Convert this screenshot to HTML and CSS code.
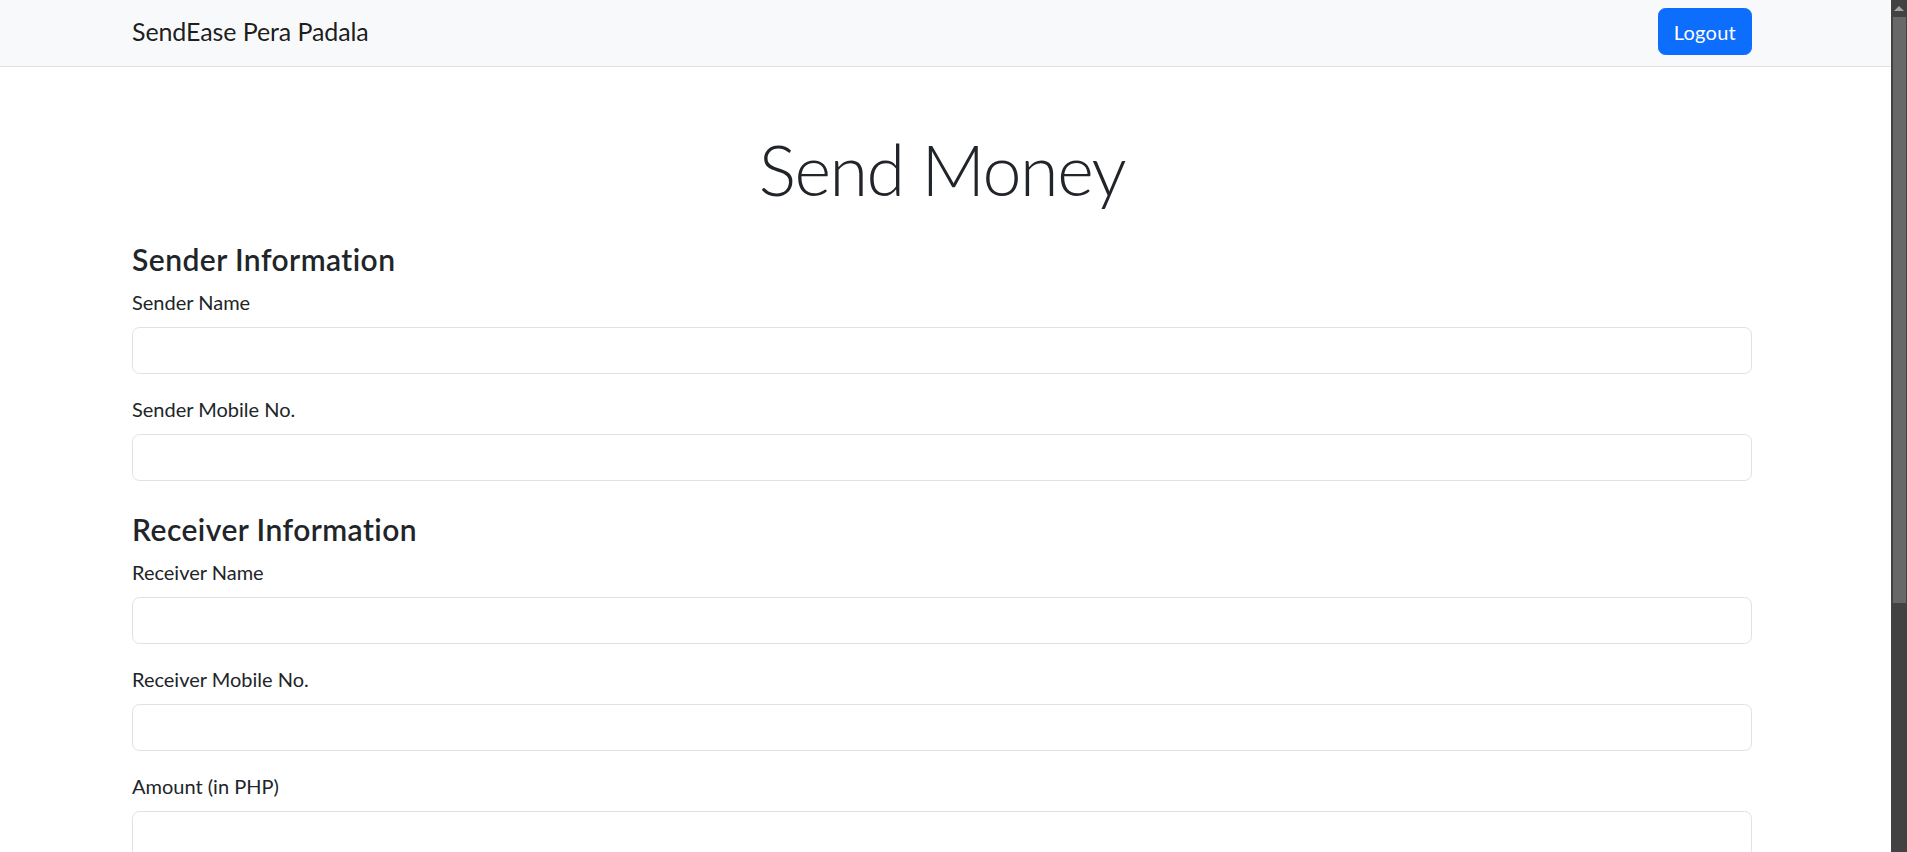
FILE: index.html
```html
<!DOCTYPE html>
<html lang="en">
<head>
<meta charset="utf-8">
<title>SendEase Pera Padala - Send Money</title>
<link rel="stylesheet" href="styles.css">
</head>
<body>
<div class="screen">
  <div class="page">
    <nav class="navbar">
      <div class="navbar-inner">
        <a class="brand" href="#">SendEase Pera Padala</a>
        <button class="btn btn-primary btn-logout" type="button">Logout</button>
      </div>
    </nav>
    <main class="container">
      <h1 class="title">Send Money</h1>
      <form class="send-form">
        <section class="section">
          <h4 class="section-title">Sender Information</h4>
          <div class="field">
            <label class="field-label" for="senderName">Sender Name</label>
            <input class="field-input" id="senderName" type="text">
          </div>
          <div class="field">
            <label class="field-label" for="senderMobile">Sender Mobile No.</label>
            <input class="field-input" id="senderMobile" type="text">
          </div>
        </section>
        <section class="section">
          <h4 class="section-title">Receiver Information</h4>
          <div class="field">
            <label class="field-label" for="receiverName">Receiver Name</label>
            <input class="field-input" id="receiverName" type="text">
          </div>
          <div class="field">
            <label class="field-label" for="receiverMobile">Receiver Mobile No.</label>
            <input class="field-input" id="receiverMobile" type="text">
          </div>
          <div class="field">
            <label class="field-label" for="amount">Amount (in PHP)</label>
            <input class="field-input" id="amount" type="number">
          </div>
        </section>
      </form>
    </main>
  </div>
  <div class="scrollbar">
    <div class="scroll-arrow"><span class="arrow-up"></span></div>
    <div class="scroll-thumb"></div>
  </div>
</div>
</body>
</html>
```
FILE: styles.css
```css
* { box-sizing: border-box; }

html, body {
  margin: 0;
  padding: 0;
  height: 852px;
  overflow: hidden;
  background: #ffffff;
}

body {
  font-family: Lato, "Noto Sans", sans-serif;
  font-size: 20px;
  line-height: 30px;
  color: #212529;
}

.screen {
  display: flex;
  height: 852px;
}

.page {
  flex: 1;
  min-width: 0;
  overflow: hidden;
}

/* navbar */
.navbar {
  height: 67px;
  background: #f8f9fa;
  border-bottom: 1px solid #dee2e6;
  padding-top: 8px;
}

.navbar-inner {
  width: 1620px;
  margin-left: 132px;
  display: flex;
  justify-content: space-between;
  align-items: flex-start;
}

.brand {
  padding-top: 5px;
  font-size: 25px;
  line-height: 37.5px;
  color: rgba(0, 0, 0, 0.9);
  text-decoration: none;
  letter-spacing: -0.1px;
}

.btn {
  height: 47px;
  padding: 7.5px 15px;
  font-family: inherit;
  font-size: 20px;
  line-height: 30px;
  border: 1px solid transparent;
  border-radius: 7.5px;
  cursor: pointer;
}

.btn-primary {
  background: #0d6efd;
  border-color: #0d6efd;
  color: #ffffff;
}

.btn-logout {
  letter-spacing: 0.25px;
}

/* content */
.container {
  width: 1620px;
  margin-left: 132px;
}

.title {
  margin: 60px 0 30px;
  font-size: 70px;
  line-height: 84px;
  font-weight: 300;
  text-align: center;
  letter-spacing: -1.4px;
  color: #212529;
}

.send-form {
  margin: 0;
  display: flex;
  flex-direction: column;
  gap: 10px;
}

.section-title {
  margin: 0 0 10px;
  font-size: 30px;
  line-height: 36px;
  font-weight: 600;
  letter-spacing: 0.45px;
  color: #212529;
}

.field {
  margin-bottom: 20px;
}

.field-label {
  display: block;
  margin-bottom: 10px;
  font-size: 20px;
  line-height: 30px;
}

.field-input {
  display: block;
  width: 100%;
  height: 47px;
  padding: 7.5px 15px;
  font-family: inherit;
  font-size: 20px;
  line-height: 30px;
  color: #212529;
  background: #ffffff;
  border: 1px solid #dee2e6;
  border-radius: 7.5px;
  outline: none;
}

/* scrollbar */
.scrollbar {
  width: 16px;
  height: 852px;
  background: #424242;
  display: flex;
  flex-direction: column;
}

.scroll-arrow {
  height: 17px;
  display: flex;
  justify-content: center;
  align-items: center;
}

.arrow-up {
  width: 0;
  height: 0;
  border-left: 5px solid transparent;
  border-right: 5px solid transparent;
  border-bottom: 5px solid #a3a3a3;
}

.scroll-thumb {
  width: 13px;
  height: 586px;
  margin-left: 2px;
  background: #686868;
}
```
